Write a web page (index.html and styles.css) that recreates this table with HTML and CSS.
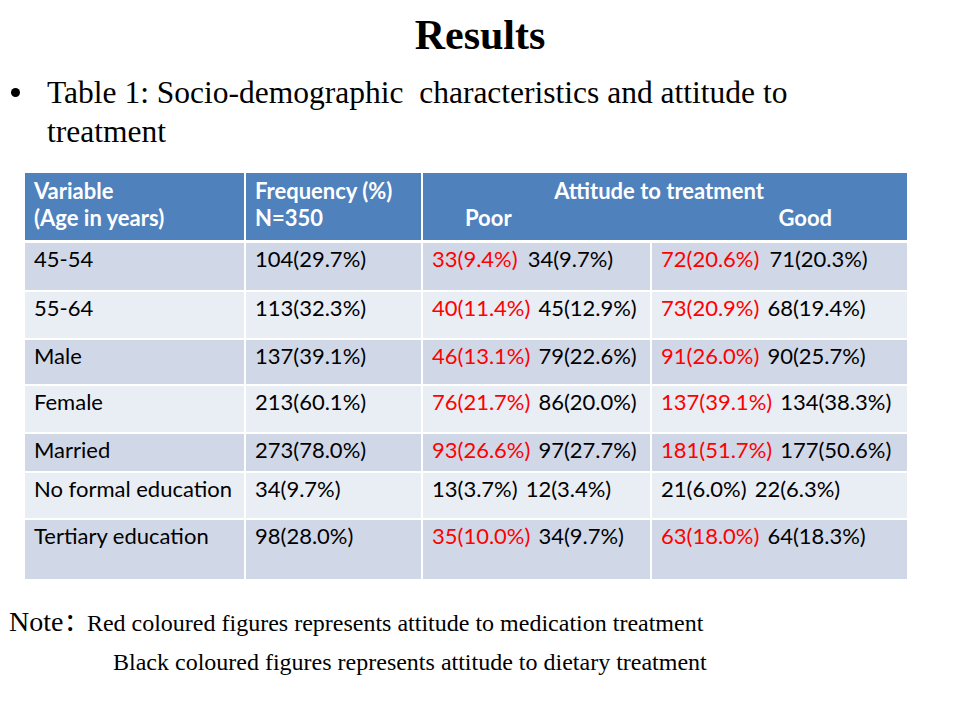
FILE: index.html
```html
<!DOCTYPE html>
<html lang="en">
<head>
<meta charset="utf-8">
<title>Results</title>
<link rel="stylesheet" href="styles.css">
</head>
<body>
<div class="slide">
  <h1 class="title">Results</h1>
  <ul class="bullets">
    <li><span class="dot" aria-hidden="true"></span><span class="btext">Table 1: Socio-demographic&nbsp; characteristics and attitude to treatment</span></li>
  </ul>
  <table class="data">
    <colgroup>
      <col class="c1"><col class="c2"><col class="c3"><col class="c4">
    </colgroup>
    <thead>
      <tr class="head">
        <th>Variable<br>(Age in years)</th>
        <th>Frequency (%)<br>N=350</th>
        <th colspan="2" class="att">
          <div class="att-top">Attitude to treatment</div>
          <div class="att-sub"><span class="poor">Poor</span><span class="good">Good</span></div>
        </th>
      </tr>
    </thead>
    <tbody>
      <tr class="dark r1"><td>45-54</td><td>104(29.7%)</td><td><span class="red">33(9.4%)</span><span class="blk w3">34(9.7%)</span></td><td><span class="red">72(20.6%)</span><span class="blk w3">71(20.3%)</span></td></tr>
      <tr class="light r2"><td>55-64</td><td>113(32.3%)</td><td><span class="red">40(11.4%)</span><span class="blk">45(12.9%)</span></td><td><span class="red">73(20.9%)</span><span class="blk">68(19.4%)</span></td></tr>
      <tr class="dark r3"><td>Male</td><td>137(39.1%)</td><td><span class="red">46(13.1%)</span><span class="blk">79(22.6%)</span></td><td><span class="red">91(26.0%)</span><span class="blk">90(25.7%)</span></td></tr>
      <tr class="light r4"><td>Female</td><td>213(60.1%)</td><td><span class="red">76(21.7%)</span><span class="blk">86(20.0%)</span></td><td><span class="red">137(39.1%)</span><span class="blk">134(38.3%)</span></td></tr>
      <tr class="dark r5"><td>Married</td><td>273(78.0%)</td><td><span class="red">93(26.6%)</span><span class="blk">97(27.7%)</span></td><td><span class="red">181(51.7%)</span><span class="blk">177(50.6%)</span></td></tr>
      <tr class="light r6"><td>No formal education</td><td>34(9.7%)</td><td><span>13(3.7%)</span><span class="blk">12(3.4%)</span></td><td><span>21(6.0%)</span><span class="blk">22(6.3%)</span></td></tr>
      <tr class="dark r7"><td>Tertiary education</td><td>98(28.0%)</td><td><span class="red">35(10.0%)</span><span class="blk">34(9.7%)</span></td><td><span class="red">63(18.0%)</span><span class="blk">64(18.3%)</span></td></tr>
    </tbody>
  </table>
  <div class="note">
    <p class="note-line"><span class="note-label">Note</span><span class="note-colon">:</span><span class="note-text">Red coloured figures represents attitude to medication treatment</span></p>
    <p class="note-line second">Black coloured figures represents attitude to dietary treatment</p>
  </div>
</div>
</body>
</html>
```
FILE: styles.css
```css
html, body {
  margin: 0;
  padding: 0;
  background: #ffffff;
}
.slide {
  width: 960px;
  height: 720px;
  position: relative;
  overflow: hidden;
  font-family: "Liberation Serif", "Times New Roman", serif;
  color: #000;
}
.title {
  margin: 0;
  padding-top: 12px;
  text-align: center;
  font-size: 42px;
  line-height: 46px;
  font-weight: bold;
}
.bullets {
  list-style: none;
  margin: 15px 0 0 0;
  padding: 0;
}
.bullets li {
  display: flex;
  align-items: flex-start;
  font-size: 31.5px;
  line-height: 39px;
}
.dot {
  flex: none;
  width: 9px;
  height: 9px;
  border-radius: 50%;
  background: #000;
  margin: 15px 27px 0 11px;
}
.btext {
  width: 800px;
}
.data {
  margin: 20px 0 0 23px;
  width: 884px;
  border-collapse: collapse;
  table-layout: fixed;
  font-family: Lato, "Open Sans", sans-serif;
  font-size: 22px;
}
.c1 { width: 221px; }
.c2 { width: 177px; }
.c3 { width: 229px; }
.c4 { width: 257px; }
.data th, .data td {
  border: 2px solid #ffffff;
  text-align: left;
  vertical-align: top;
  padding: 4px 0 0 9px;
  line-height: 24px;
  white-space: nowrap;
  overflow: hidden;
}
.data th {
  background: #4f81bd;
  color: #ffffff;
  font-weight: bold;
  height: 63px;
  line-height: 27px;
  padding-top: 4px;
  border-bottom-width: 3px;
}
.data th.att {
  padding-left: 0;
}
.att-top {
  text-align: center;
  padding-right: 12px;
}
.att-sub {
  display: flex;
  justify-content: space-between;
  padding: 0 75px 0 42px;
}
.dark td { background: #d0d8e8; }
.light td { background: #e9edf4; }
.r1 td { height: 43px; }
.r2 td { height: 42px; }
.r3 td { height: 40px; }
.r4 td { height: 42px; }
.r5 td { height: 33px; }
.r6 td { height: 41px; }
.r7 td { height: 55px; }
.red { color: #ff0000; }
.blk { margin-left: 8px; color: #000; }
.blk.w3 { margin-left: 10px; }
.note {
  margin-top: 24px;
}
.note-line {
  margin: 0;
  font-size: 24px;
  line-height: 30px;
  white-space: nowrap;
}
.note-label {
  display: inline-block;
  padding-left: 9px;
  font-size: 28px;
  line-height: 30px;
}
.note-colon {
  font-size: 34px;
  line-height: 30px;
  margin-left: 2px;
  margin-right: 12px;
}
.note-line.second {
  padding-left: 113px;
  margin-top: 9px;
}
```
